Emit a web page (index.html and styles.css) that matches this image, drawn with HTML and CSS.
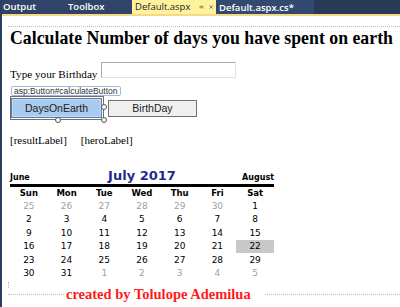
FILE: index.html
```html
<!doctype html>
<html lang="en">
  <head>
    <meta charset="UTF-8" />
    <title>Default.aspx</title>
    <link rel="stylesheet" href="styles.css">
  </head>
  <body>
    <div class="ide">
      <div class="tabs">
        <div class="tab tab-tool">Output</div>
        <div class="tab tab-tool">Toolbox</div>
        <div class="tab tab-active">
          <span>Default.aspx</span>
          <svg class="tab-pin" width="8" height="8" viewBox="0 0 8 8">
            <path d="M0 4H3M3.5 1.5V6.5M3.5 2.5H7.5V5.5H3.5" fill="none" stroke="#5c5230" stroke-width="1"/>
          </svg>
          <svg class="tab-close" width="8" height="8" viewBox="0 0 8 8">
            <path d="M1 1L7 7M7 1L1 7" stroke="#4a4a4a" stroke-width="1.3"/>
          </svg>
        </div>
        <div class="tab tab-open">Default.aspx.cs*</div>
        <div class="tab-fill"></div>
      </div>
      <div class="surface">
        <div class="form-box">
          <h1>Calculate Number of days you have spent on earth</h1>
          <div class="birthday-row">
            <span>Type your Birthday</span>
            <span class="textbox"></span>
          </div>
          <div class="tag">asp:Button#calculateButton</div>
          <div class="buttons">
            <div class="selected">
              <div class="btn btn-primary">DaysOnEarth</div>
              <span class="handle handle-r"></span>
              <span class="handle handle-b"></span>
              <span class="handle handle-br"></span>
            </div>
            <div class="btn">BirthDay</div>
          </div>
          <div class="labels">
            <span>[resultLabel]</span>
            <span>[heroLabel]</span>
          </div>

          <table class="calendar">
            <tr class="cal-title">
              <td class="cal-nav">June</td>
              <td colspan="5" class="cal-month">July 2017</td>
              <td class="cal-nav cal-next">August</td>
            </tr>
            <tr class="cal-days">
              <th>Sun</th><th>Mon</th><th>Tue</th><th>Wed</th><th>Thu</th><th>Fri</th><th>Sat</th>
            </tr>
            <tr>
              <td class="other">25</td><td class="other">26</td><td class="other">27</td><td class="other">28</td><td class="other">29</td><td class="other">30</td><td>1</td>
            </tr>
            <tr>
              <td>2</td><td>3</td><td>4</td><td>5</td><td>6</td><td>7</td><td>8</td>
            </tr>
            <tr>
              <td>9</td><td>10</td><td>11</td><td>12</td><td>13</td><td>14</td><td>15</td>
            </tr>
            <tr>
              <td>16</td><td>17</td><td>18</td><td>19</td><td>20</td><td>21</td><td class="today">22</td>
            </tr>
            <tr>
              <td>23</td><td>24</td><td>25</td><td>26</td><td>27</td><td>28</td><td>29</td>
            </tr>
            <tr>
              <td>30</td><td>31</td><td class="other">1</td><td class="other">2</td><td class="other">3</td><td class="other">4</td><td class="other">5</td>
            </tr>
          </table>
        </div>
        <div class="footer-mark"></div>
        <div class="credit-row">
          <span class="credit-line credit-line-left"></span>
          <span class="credit">created by Tolulope Ademilua</span>
          <span class="credit-line credit-line-right"></span>
        </div>
      </div>
    </div>
  </body>
</html>
```

FILE: styles.css
```css
body {
  margin: 0;
  padding: 0;
  background-color: #ffffff;
  font-family: "Liberation Serif", "Times New Roman", serif;
  overflow: hidden;
}

.ide {
  height: 307px;
  border-left: 2px solid #2d3e5f;
  box-sizing: border-box;
}

/* Document tab strip */
.tabs {
  display: flex;
  height: 14px;
  background-color: #2f4468;
  border-bottom: 2px solid #f3d98a;
  font-family: "Open Sans", "DejaVu Sans", sans-serif;
  font-size: 9.5px;
  font-weight: 600;
  line-height: 14px;
}

.tab {
  color: #ffffff;
  white-space: nowrap;
  flex-shrink: 0;
}

.tab-tool {
  width: 64px;
  padding-left: 1px;
}

.tab-active {
  display: flex;
  align-items: center;
  box-sizing: border-box;
  width: 84px;
  padding: 0 3px 0 3px;
  background-color: #fff29d;
  color: #1e1e1e;
  font-weight: 400;
}

.tab-pin {
  margin-left: 9px;
}

.tab-close {
  margin-left: 5px;
}

.tab-open {
  box-sizing: border-box;
  width: 98px;
  padding: 1px 0 0 3px;
  line-height: 13px;
  background-color: #324a70;
}

.tab-fill {
  flex: 1;
  background-color: #283a58;
}

/* Design surface */
.surface {
  padding: 10px 0 0 6px;
}

.form-box {
  border-top: 1px dotted #bdbdbd;
  padding: 0 0 0 2px;
}

h1 {
  margin: 0;
  font-size: 17.8px;
  line-height: 22px;
  font-weight: bold;
  color: #000;
  white-space: nowrap;
}

.birthday-row {
  display: flex;
  align-items: baseline;
  gap: 4px;
  margin-top: 13px;
  font-size: 11.2px;
  line-height: 14px;
}

.textbox {
  width: 133px;
  height: 14px;
  border: 1px solid #a9a9a9;
  border-bottom-color: #e3e3e3;
  border-right-color: #e3e3e3;
}

.tag {
  width: max-content;
  margin: 5px 0 0 1px;
  padding: 0 2px;
  border: 1px solid #a7b8de;
  border-radius: 2px;
  font-family: "Liberation Sans", Arial, sans-serif;
  font-size: 8.5px;
  line-height: 8px;
  color: #333;
}

.buttons {
  display: flex;
  align-items: flex-start;
  gap: 4px;
}

.selected {
  position: relative;
  border: 1px solid #707070;
  padding: 1px 1px 1px 0;
}

.btn {
  width: 87px;
  height: 15px;
  margin-top: 4px;
  border: 1px solid #707070;
  background-color: #efefef;
  font-family: "Liberation Sans", Arial, sans-serif;
  font-size: 10.5px;
  line-height: 15px;
  text-align: center;
  color: #222;
}

.btn-primary {
  width: 89px;
  height: 18px;
  margin-top: 0;
  line-height: 18px;
  background-color: #a9cbee;
  border-color: #5a7fa8;
  box-shadow: inset 0 0 0 1px #c3daf3;
}

.handle {
  position: absolute;
  width: 4px;
  height: 4px;
  border: 1px solid #555;
  border-radius: 50%;
  background: #fff;
}

.handle-r {
  right: -4px;
  top: 7px;
}

.handle-b {
  left: 44px;
  bottom: -4px;
}

.handle-br {
  right: -4px;
  bottom: -4px;
}

.labels {
  display: flex;
  gap: 14px;
  margin-top: 14px;
  font-size: 11px;
  line-height: 13px;
}

/* Calendar control */
.calendar {
  margin-top: 21px;
  width: 264px;
  border-collapse: collapse;
  table-layout: fixed;
  font-family: "DejaVu Sans", Verdana, sans-serif;
  font-size: 9px;
  color: #000;
}

.calendar td,
.calendar th {
  padding: 0;
  height: 13.5px;
  text-align: center;
}

.cal-title td {
  height: auto;
  vertical-align: baseline;
  padding-bottom: 1px;
  border-bottom: 3px solid #000;
}

.cal-nav {
  font-weight: bold;
  font-size: 8px;
  text-align: left !important;
}

.cal-next {
  text-align: right !important;
}

.cal-month {
  font-weight: bold;
  font-size: 13px;
  color: #1f2a8f;
}

.cal-days th {
  font-weight: bold;
  font-size: 8.5px;
  height: 12px;
}

.calendar .other {
  color: #a0a0a0;
}

.calendar .today {
  background-color: #c8c8c8;
}

/* Footer credit */
.footer-mark {
  margin-top: 2px;
  height: 6px;
  border-left: 1px dotted #bdbdbd;
}

.credit-row {
  display: flex;
  align-items: center;
  line-height: 12px;
}

.credit-line {
  border-top: 1px dotted #bdbdbd;
}

.credit-line-left {
  width: 56px;
}

.credit-line-right {
  flex: 1;
  margin-left: 14px;
}

.credit {
  padding-left: 2px;
  color: #ff1a1a;
  font-weight: bold;
  font-size: 14.5px;
  white-space: nowrap;
}
```
